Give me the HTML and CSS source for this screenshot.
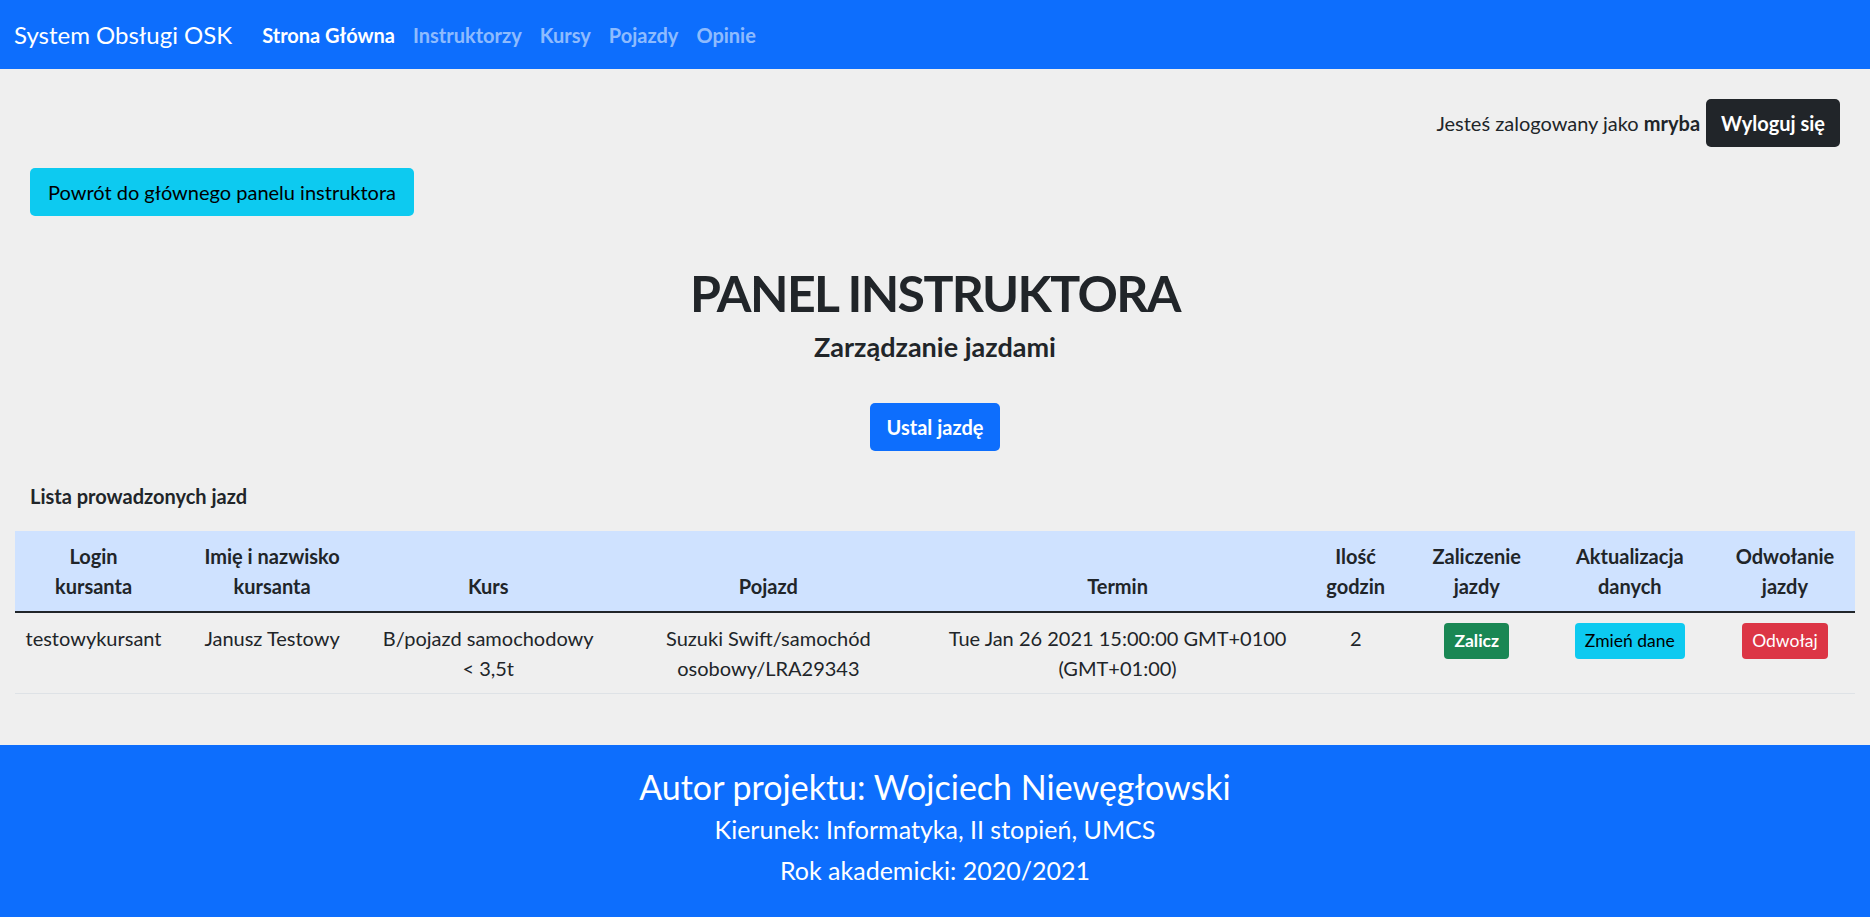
FILE: index.html
```html
<!DOCTYPE html>
<html lang="pl">
<head>
<meta charset="utf-8">
<title>System Obsługi OSK</title>
<link rel="stylesheet" href="styles.css">
</head>
<body>
<nav class="navbar">
  <a class="brand" href="#">System Obsługi OSK</a>
  <ul class="nav-links">
    <li><a class="nav-link active" href="#">Strona Główna</a></li>
    <li><a class="nav-link" href="#">Instruktorzy</a></li>
    <li><a class="nav-link" href="#">Kursy</a></li>
    <li><a class="nav-link" href="#">Pojazdy</a></li>
    <li><a class="nav-link" href="#">Opinie</a></li>
  </ul>
</nav>
<main class="content">
  <div class="userbar">
    <span class="user-text">Jesteś zalogowany jako <b>mryba</b></span>
    <button class="btn btn-dark">Wyloguj się</button>
  </div>
  <div class="back-row">
    <button class="btn btn-info btn-back">Powrót do głównego panelu instruktora</button>
  </div>
  <section class="heading">
    <h1 class="title">PANEL INSTRUKTORA</h1>
    <h2 class="subtitle">Zarządzanie jazdami</h2>
    <button class="btn btn-primary">Ustal jazdę</button>
  </section>
  <h3 class="list-title">Lista prowadzonych jazd</h3>
  <table class="rides">
    <colgroup>
      <col class="c1"><col class="c2"><col class="c3"><col class="c4"><col class="c5"><col class="c6"><col class="c7"><col class="c8"><col class="c9">
    </colgroup>
    <thead>
      <tr>
        <th>Login<br>kursanta</th>
        <th>Imię i nazwisko<br>kursanta</th>
        <th>Kurs</th>
        <th>Pojazd</th>
        <th>Termin</th>
        <th>Ilość<br>godzin</th>
        <th>Zaliczenie<br>jazdy</th>
        <th>Aktualizacja<br>danych</th>
        <th>Odwołanie<br>jazdy</th>
      </tr>
    </thead>
    <tbody>
      <tr>
        <td>testowykursant</td>
        <td>Janusz Testowy</td>
        <td>B/pojazd samochodowy<br>&lt; 3,5t</td>
        <td>Suzuki Swift/samochód<br>osobowy/LRA29343</td>
        <td>Tue Jan 26 2021 15:00:00 GMT+0100<br>(GMT+01:00)</td>
        <td>2</td>
        <td><button class="btn btn-sm btn-success">Zalicz</button></td>
        <td><button class="btn btn-sm btn-info">Zmień dane</button></td>
        <td><button class="btn btn-sm btn-danger">Odwołaj</button></td>
      </tr>
    </tbody>
  </table>
</main>
<footer class="footer">
  <p class="author">Autor projektu: Wojciech Niewęgłowski</p>
  <p class="info">Kierunek: Informatyka, II stopień, UMCS</p>
  <p class="info">Rok akademicki: 2020/2021</p>
</footer>
</body>
</html>
```

FILE: styles.css
```css
* { box-sizing: border-box; }

html, body {
  margin: 0;
  padding: 0;
}

body {
  font-family: Lato, "Open Sans", sans-serif;
  font-size: 20px;
  line-height: 1.5;
  color: #212529;
  background: #efefef;
  width: 1870px;
  min-height: 917px;
  display: flex;
  flex-direction: column;
}

/* Navbar */
.navbar {
  background: #0d6efd;
  height: 69px;
  display: flex;
  align-items: center;
  padding: 0 14px;
}

.brand {
  color: #fff;
  text-decoration: none;
  font-size: 24px;
  margin-right: 30px;
}

.nav-links {
  list-style: none;
  margin: 0;
  padding: 0;
  display: flex;
  gap: 18px;
}

.nav-link {
  color: rgba(255, 255, 255, 0.55);
  text-decoration: none;
  font-weight: 700;
}

.nav-link.active { color: #fff; }

/* Content */
.content {
  flex: 1;
  padding: 0 15px 50px;
}

.userbar {
  display: flex;
  justify-content: flex-end;
  align-items: center;
  gap: 6px;
  margin-top: 30px;
  padding-right: 15px;
}

.user-text b { font-weight: 700; }

.btn {
  font-family: inherit;
  font-size: 20px;
  line-height: 30px;
  padding: 9px 15px;
  border: 0;
  border-radius: 5px;
  cursor: pointer;
}

.btn-dark { background: #212529; color: #fff; font-weight: 700; }
.btn-info { background: #0dcaf0; color: #000; }
.btn-primary { background: #0d6efd; color: #fff; font-weight: 700; padding: 9px 17px; }
.btn-success { background: #198754; color: #fff; font-weight: 700; }
.btn-danger { background: #dc3545; color: #fff; }
.btn-back { padding: 9px 18px; }

.btn-sm {
  font-size: 17.5px;
  line-height: 26px;
  padding: 5px 10px;
  border-radius: 4px;
}

.back-row {
  margin-top: 21px;
  padding-left: 15px;
}

.heading {
  text-align: center;
}

.title {
  margin: 47px 0 0;
  font-size: 50px;
  font-weight: 700;
  letter-spacing: -1.6px;
  line-height: 1.2;
}

.subtitle {
  margin: 8px 0 0;
  font-size: 27px;
  font-weight: 700;
  line-height: 1.2;
}

.heading .btn {
  margin-top: 40px;
}

.list-title {
  margin: 30px 0 20px;
  padding-left: 15px;
  font-size: 20px;
  font-weight: 700;
}

/* Table */
.rides {
  width: 1840px;
  table-layout: fixed;
  border-collapse: collapse;
}

.c1 { width: 157px; }
.c2 { width: 200px; }
.c3 { width: 232px; }
.c4 { width: 328px; }
.c5 { width: 370px; }
.c6 { width: 106px; }
.c7 { width: 136px; }
.c8 { width: 170px; }
.c9 { width: 140px; }

.rides th,
.rides td {
  padding: 10px;
  text-align: center;
}

.rides thead th {
  background: #cfe2ff;
  font-weight: 700;
  vertical-align: bottom;
  border-bottom: 2.5px solid #212529;
}

.rides tbody td {
  vertical-align: top;
  border-bottom: 1.25px solid #dee2e6;
}

/* Footer */
.footer {
  background: #0d6efd;
  color: #fff;
  text-align: center;
  height: 172px;
  padding-top: 20px;
}

.footer p { margin: 0; }

.author {
  font-size: 34px;
  line-height: 1.3;
}

.info {
  font-size: 25px;
  line-height: 1.65;
}
```
